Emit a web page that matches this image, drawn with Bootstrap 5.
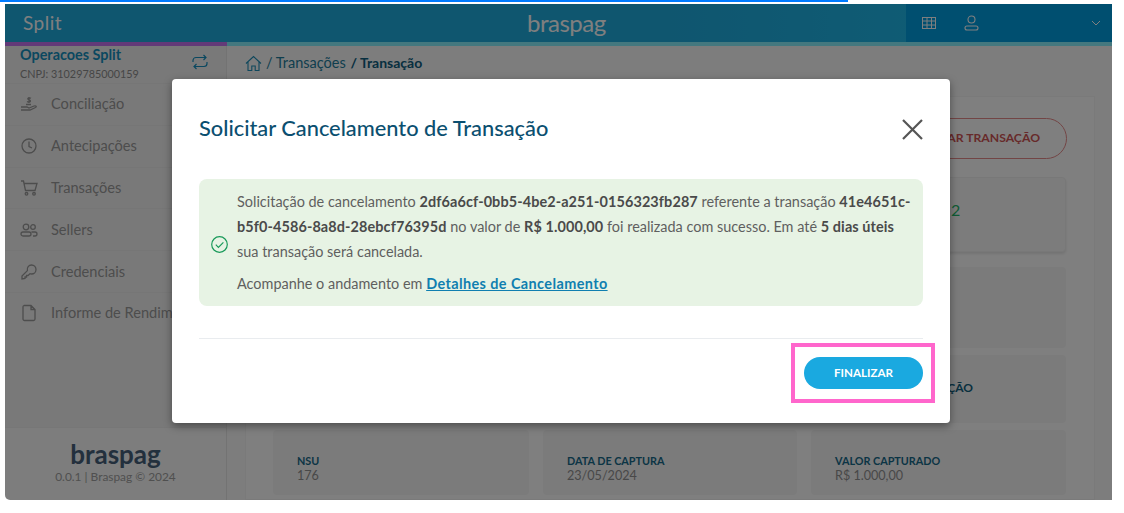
<!doctype html>
<html lang="pt-BR">
<head>
<meta charset="utf-8">
<title>Transação</title>
<link href="https://cdn.jsdelivr.net/npm/bootstrap@5.3.0/dist/css/bootstrap.min.css" rel="stylesheet">
<style>
html,body{height:100%;background:#fff;overflow:hidden}
body{font-family:Lato,"Noto Sans","Liberation Sans",sans-serif;font-size:14.5px;color:#555}
.load-line{height:2px;width:848px;background:#007bff;margin-bottom:2px}
.app-frame{width:1107px;height:496px;margin-left:5px;position:relative;overflow:hidden;border-radius:0 0 0 5px;background:#fafafa}
.top-head{height:38px;background:linear-gradient(90deg,#1eacdf,#1eacdf 60%,#1fc2f2);color:#fff;position:relative}
.brand-split{font-size:19px;padding-left:18px;line-height:38px;letter-spacing:.5px;flex:0 0 440px}
.brand-mid{font-size:24px;line-height:36px;letter-spacing:-.5px;width:461px;padding-left:82px}
.head-right{width:206px;height:38px;background:#009ee0;padding-left:16px}
.head-right svg{stroke:#fff;fill:none}
.head-slot-a{width:42px}
.head-slot-b{flex:1}
.strip-row{height:4px}
.strip-a{width:222px;background:#c774f0}
.strip-b{flex:1;background:#88f0ff}
.body-row{height:454px}
.side-col{width:222px;background:#f3f3f3;border-right:1px solid #e6e6e6}
.acct-box{height:37px;padding:0 15px;position:relative;line-height:1}
.acct-name{color:#1590c0;font-weight:700;font-size:14.4px;padding-top:0;line-height:17px}
.acct-doc{font-size:10.8px;color:#8c8c8c;line-height:21px}
.menu-row{height:41.8px;border-top:1px solid #ececec;padding-left:15px;color:#9a9a9a;font-size:14.6px;gap:13px;white-space:nowrap;overflow:hidden}
.menu-row svg{width:18px;height:18px;flex:none;stroke:#9a9a9a;fill:none;stroke-width:1.3}
.side-foot{height:73px;background:#fafafa;text-align:center;color:#a0a0a0;font-size:11.9px;border-top:1px solid #eee}
.foot-logo{font-size:26px;font-weight:700;color:#46607a;line-height:26px;padding-top:13px;margin-bottom:1px}
.main-col{flex:1;min-width:0}
.crumb{height:50px;padding:0 18px 16px;color:#1f7d9d;font-size:14.5px;gap:4px}
.crumb svg{stroke:#1f8fb8;fill:none}
.crumb b{color:#0f5e80;font-weight:700;font-size:14px;margin-left:1px}
.panel-box{margin:0 17px 0 18px;background:#fff;height:404px;padding:21px 28px 0 27px;border:1px solid #f4f4f4}
.cancel-pill{height:41px;width:210px;border:1px solid #e58a8a;border-radius:21px;color:#cf5555;font-size:12.2px;font-weight:700;background:transparent;padding:0 26px 0 0;margin-right:-1px}
.tile-first{width:255px;height:75px;margin-top:18px;background:#f9f9f9;border-radius:4px;box-shadow:0 2px 3px rgba(0,0,0,.1);border:1px solid #f0f0f0;padding:20px 0 0 139px;font-size:16px;color:#1fb86a}
.tile-soft{background:#f6f6f6;border-radius:4px}
.tile-grid{display:grid;grid-template-columns:256px 254px 255px;column-gap:14px;row-gap:7px;margin-top:15px}
.tile-mid{height:81px}
.tile-code{height:68px;font-size:12px;font-weight:700;color:#11607f;padding:24px 0 0 25px;white-space:nowrap}
.tile-last{height:65px;padding:23px 0 0 24px;font-size:12.6px;color:#919191;line-height:15px}
.tile-last strong{display:block;font-size:10.8px;font-weight:700;color:#176a8a}
.dim-layer{position:absolute;inset:0;background:rgba(0,0,0,.5);padding:75px 0 0 167px}
.dlg-box{width:778px;height:344px;border:0;border-radius:4px;box-shadow:0 3px 8px rgba(0,0,0,.4);padding:0 27px;display:block}
.dlg-head{height:100px}
.dlg-title{font-size:21.8px;font-weight:500;color:#0b4f70;margin:0;position:relative;top:-1px}
.dlg-x{background:none;border:0;padding:0;line-height:0}
.ok-note{background:#e7f3e4;border-radius:8px;height:127px;padding:10px 12px 10px 12px;gap:9px;color:#5f5f5f;font-size:14.45px;line-height:25px}
.ok-note p{margin:0}
.ok-note p+p{margin-top:7px}
.ok-note b{font-weight:700;color:#4a4a4a;letter-spacing:.1px}
.ok-note a{color:#0f7fb0;font-weight:700;letter-spacing:.4px}
.ok-note svg{flex:none;stroke:#1a9a5a;fill:none;margin-top:47px;width:17px;height:17px}
.dlg-rule{margin:32px 0 0;border-top:1px solid #e9ecef;opacity:1}
.pink-frame{border:4px solid #ff66cc;padding:10px 8px 10px 9px;margin:4px -12px 0 0;line-height:0}
.go-btn{width:119px;height:32px;border-radius:16px;border:0;background:#1aa9e0;color:#fff;font-size:11.6px;font-weight:700;padding:0;line-height:32px}
</style>
</head>
<body>
<div class="load-line"></div>
<div class="app-frame">
  <header class="top-head d-flex align-items-center">
    <div class="brand-split">Split</div>
    <div class="brand-mid">braspag</div>
    <div class="head-right d-flex align-items-center">
      <div class="head-slot-a"><svg width="14" height="13" viewBox="0 0 14 13" stroke-width="1" style="display:block"><rect x=".5" y=".5" width="13" height="11"/><path d="M.5 4h13M.5 8h13M5 .5v11M9.500 .5v11"/></svg></div>
      <div class="head-slot-b"><svg width="15" height="16" viewBox="0 0 15 16" stroke-width="1.1" style="display:block"><circle cx="7.500" cy="4.500" r="3.500"/><rect x="1" y="11" width="13" height="4" rx="2"/></svg></div>
      <svg width="10" height="6" viewBox="0 0 10 6" stroke-width="1" style="margin:0 11px 0 0"><path d="M1 1l4 4 4-4"/></svg>
    </div>
  </header>
  <div class="strip-row d-flex"><div class="strip-a"></div><div class="strip-b"></div></div>
  <div class="body-row d-flex">
    <aside class="side-col d-flex flex-column">
      <div class="acct-box d-flex justify-content-between">
        <div><div class="acct-name">Operacoes Split</div><div class="acct-doc">CNPJ: 31029785000159</div></div>
        <svg width="18" height="18" viewBox="0 0 18 18" fill="none" stroke="#1590c0" stroke-width="1.2" style="margin-top:7px;margin-right:2px"><path d="M2 9V7.500a3 3 0 0 1 3-3h10M12.500 2l2.500 2.500L12.500 7M16 9v1.500a3 3 0 0 1-3 3H3M5.500 11L3 13.500 5.500 16"/></svg>
      </div>
      <div class="menu-row d-flex align-items-center"><svg viewBox="0 0 18 18"><path d="M1 12h6l2 1 5-2c2-.7 3 .7 1.500 1.500L10 15H1M6 9.500h5"/><path d="M9 2v6M11 3.300C10 2.500 7.800 2.600 7.800 3.800S10.500 4.700 10.500 6 8 7.300 7 6.500"/></svg>Conciliação</div>
      <div class="menu-row d-flex align-items-center"><svg viewBox="0 0 18 18"><circle cx="9" cy="9" r="7"/><path d="M9 4.500V9.500l3 1.500"/></svg>Antecipações</div>
      <div class="menu-row d-flex align-items-center"><svg viewBox="0 0 18 18"><path d="M1 2h2.500l2 9.500h9.500l2-7H4"/><circle cx="6.500" cy="14.800" r="1.300"/><circle cx="14" cy="14.800" r="1.300"/></svg>Transações</div>
      <div class="menu-row d-flex align-items-center"><svg viewBox="0 0 18 18"><circle cx="6" cy="6" r="2.800"/><circle cx="13" cy="6" r="2.300"/><rect x="1" y="11" width="10" height="4" rx="2"/><path d="M11.500 11H15a2 2 0 0 1 0 4h-2"/></svg>Sellers</div>
      <div class="menu-row d-flex align-items-center"><svg viewBox="0 0 18 18"><path d="M11.500 2a4.500 4.500 0 0 1 0 9c-.8 0-1.200-.2-1.500-.3L8 12.500H6.500V14H5v1.500L2 16v-3l5.400-5.400C6.700 4.500 8.800 2 11.500 2z"/></svg>Credenciais</div>
      <div class="menu-row d-flex align-items-center"><svg viewBox="0 0 18 18"><path d="M4 1.500h7l4 4V15a1.500 1.500 0 0 1-1.500 1.500h-9A1.500 1.500 0 0 1 3 15V3a1.500 1.500 0 0 1 1-1.500zM11 1.500V5.500h4"/></svg>Informe de Rendimentos</div>
      <div class="flex-grow-1"></div>
      <div class="side-foot"><div class="foot-logo">braspag</div><div>0.0.1 | Braspag © 2024</div></div>
    </aside>
    <main class="main-col">
      <nav class="crumb d-flex align-items-center">
        <svg width="17" height="17" viewBox="0 0 17 17" stroke-width="1.100"><path d="M1 8.500l7.500-7 7.500 7M3 7v8.500h3.800V11h3.400v4.500H14V7"/></svg>
        <span>/ Transações <b>/ Transação</b></span>
      </nav>
      <section class="panel-box">
        <div class="d-flex justify-content-end"><button class="cancel-pill text-end" type="button">CANCELAR TRANSAÇÃO</button></div>
        <div class="tile-first ms-auto">2</div>
        <div class="tile-grid">
          <div class="tile-soft tile-mid"></div><div class="tile-soft tile-mid"></div><div class="tile-soft tile-mid"></div>
          <div class="tile-soft tile-code"></div><div class="tile-soft tile-code"></div><div class="tile-soft tile-code">CÓDIGO AUTORIZAÇÃO</div>
          <div class="tile-soft tile-last"><strong>NSU</strong>176</div>
          <div class="tile-soft tile-last"><strong>DATA DE CAPTURA</strong>23/05/2024</div>
          <div class="tile-soft tile-last"><strong>VALOR CAPTURADO</strong>R$ 1.000,00</div>
        </div>
      </section>
    </main>
  </div>
  <div class="dim-layer">
    <div class="modal-content dlg-box bg-white">
      <div class="dlg-head d-flex align-items-center justify-content-between">
        <h5 class="dlg-title">Solicitar Cancelamento de Transação</h5>
        <button class="dlg-x" type="button" aria-label="Fechar"><svg width="21" height="21" viewBox="0 0 21 21" fill="none" stroke="#555" stroke-width="2.200"><path d="M1 1l19 19M20 1L1 20"/></svg></button>
      </div>
      <div class="ok-note d-flex">
        <svg viewBox="0 0 17 17" stroke-width="1.200"><circle cx="8.500" cy="8.500" r="7.800"/><path d="M4.800 8.700l2.600 2.600 5-5"/></svg>
        <div>
          <p>Solicitação de cancelamento <b>2df6a6cf-0bb5-4be2-a251-0156323fb287</b> referente a transação <b>41e4651c-b5f0-4586-8a8d-28ebcf76395d</b> no valor de <b>R$ 1.000,00</b> foi realizada com sucesso. Em até <b>5 dias úteis</b> sua transação será cancelada.</p>
          <p>Acompanhe o andamento em <a href="#">Detalhes de Cancelamento</a></p>
        </div>
      </div>
      <hr class="dlg-rule">
      <div class="d-flex justify-content-end">
        <div class="pink-frame"><button class="go-btn" type="button">FINALIZAR</button></div>
      </div>
    </div>
  </div>
</div>
<script src="https://cdn.jsdelivr.net/npm/bootstrap@5.3.0/dist/js/bootstrap.bundle.min.js"></script>
</body>
</html>
